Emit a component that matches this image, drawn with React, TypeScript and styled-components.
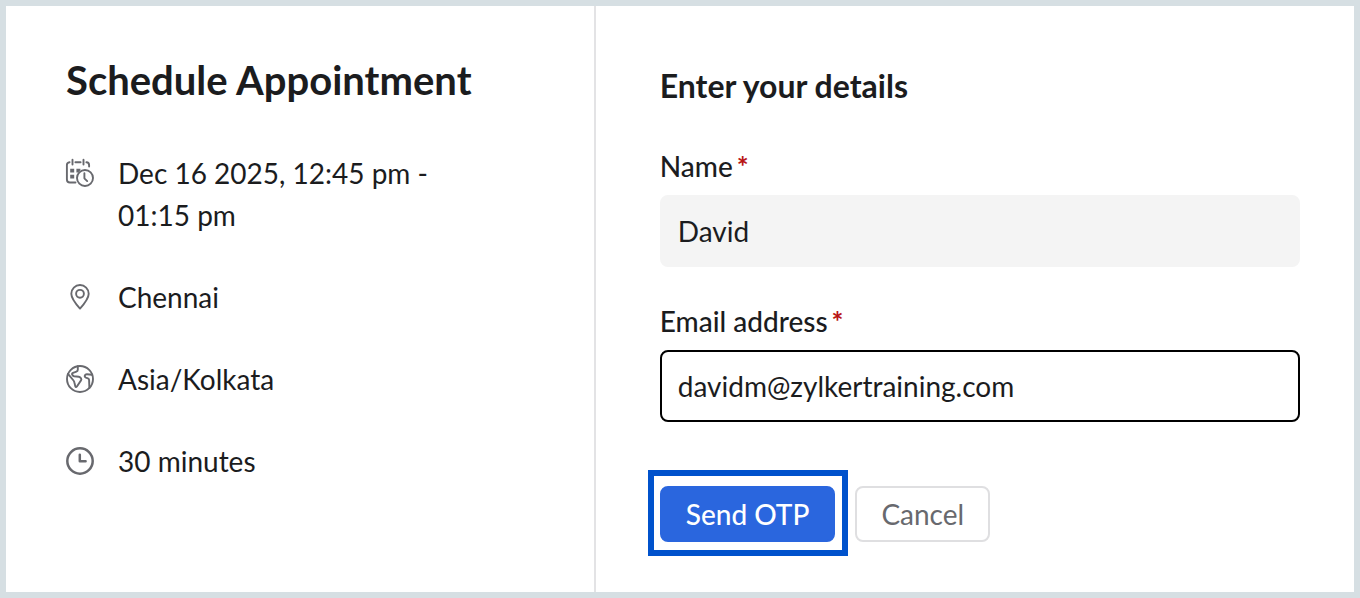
import React, { useState } from "react";
import styled, { createGlobalStyle, css } from "styled-components";

const GlobalStyle = createGlobalStyle`
  *, *::before, *::after { box-sizing: border-box; }
  body {
    margin: 0;
    color: #1b1c1e;
    background: #fff;
    font-family: Lato, "Open Sans", sans-serif;
    font-size: 28px;
    line-height: 42px;
  }
`;

const Page = styled.main`
  display: grid;
  grid-template-columns: 7fr 9fr;
  min-height: 100vh;
  border: 6px solid #d6dfe3;
  background: #fff;
`;

const Summary = styled.section`
  padding: 50px 80px 60px 60px;
  border-right: 2px solid #e3e3e5;
`;

const Title = styled.h1`
  margin: 0 0 48px;
  font-size: 40px;
  line-height: 48px;
  font-weight: 700;
`;

const DetailList = styled.ul`
  display: flex;
  flex-direction: column;
  gap: 40px;
  margin: 0;
  padding: 0;
  list-style: none;
`;

const DetailItem = styled.li`
  display: flex;
  align-items: flex-start;
  gap: 24px;
`;

const IconSlot = styled.span`
  display: flex;
  flex: 0 0 28px;
  align-items: center;
  height: 42px;
  color: #68696e;
`;

const Icon = styled.svg<{ $weight?: number }>`
  width: 28px;
  height: 28px;
  overflow: visible;
  fill: none;
  stroke: currentColor;
  stroke-width: ${(p) => p.$weight ?? 1.9};
  stroke-linecap: round;
  stroke-linejoin: round;
`;

const DetailsForm = styled.form`
  padding: 60px 54px 36px 64px;
`;

const FormTitle = styled.h2`
  margin: 0 0 39px;
  font-size: 32px;
  line-height: 40px;
  font-weight: 700;
`;

const Fields = styled.div`
  display: flex;
  flex-direction: column;
  gap: 33px;
`;

const Field = styled.div`
  display: flex;
  flex-direction: column;
  gap: 8px;
`;

const Label = styled.label`
  font-weight: 500;
`;

const Required = styled.span`
  margin-left: 4px;
  color: #b91515;
  font-weight: 700;
`;

const TextInput = styled.input<{ $filled?: boolean }>`
  width: 100%;
  height: 72px;
  padding: 0 16px;
  border: 2px solid ${(p) => (p.$filled ? "#f4f4f4" : "#000")};
  border-radius: 8px;
  outline: none;
  background: ${(p) => (p.$filled ? "#f4f4f4" : "#fff")};
  color: inherit;
  font: inherit;
`;

const Actions = styled.div`
  display: flex;
  align-items: baseline;
  gap: 7px;
  margin: 48px 0 0 -12px;
`;

const Highlight = styled.div`
  padding: 10px 7px 8px 6px;
  border: 6px solid #0052cc;
`;

const Button = styled.button<{ $primary?: boolean }>`
  display: block;
  height: 56px;
  padding: 0 24px;
  border: 2px solid #dfdfe1;
  border-radius: 8px;
  background: #fff;
  color: #68696e;
  font: inherit;
  cursor: pointer;
  ${(p) =>
    p.$primary &&
    css`
      border-color: #2a66de;
      background: #2a66de;
      color: #fff;
      font-weight: 500;
    `}
`;

const CalendarIcon = () => (
  <Icon viewBox="0 0 28 28" aria-hidden="true">
    <path d="M3.6 3.2Q.9 3.5.9 6v14.5q0 3 3 3h5.6M9.4 3.2h5.2M20.4 3.2q2.7.2 2.7 3v1.3" />
    <path d="M6.5.7v4.8M17.5.7v4.8" />
    <path d="M4.2 9.8h4v3.7h-4zM10.4 9.8h4v1.5l-2.3 2.2h-1.7zM4.2 15.8h4v3.7h-4z" fill="currentColor" stroke="none" />
    <circle cx="19" cy="19" r="8" />
    <path d="M18.4 14.3v5l2.8 2.8" />
  </Icon>
);

const PinIcon = () => (
  <Icon viewBox="0 0 28 28" aria-hidden="true">
    <path d="M14 25.6C10.8 22 5.3 15.8 5.3 10.7a8.7 8.7 0 0 1 17.4 0c0 5.1-5.5 11.3-8.7 14.9z" />
    <circle cx="14" cy="10.8" r="3.9" />
  </Icon>
);

const GlobeIcon = () => (
  <Icon viewBox="0 0 28 28" aria-hidden="true">
    <circle cx="14" cy="14" r="13" />
    <path d="M11.8 1.3v3.5q0 1.4-1.4 1.9L7 7.9q-1.4.6-.8 1.8.5 1.3 1.9 1.5l4.6.5q1.2.2 1.9 1.1l.5.7q.6.9-.1 1.9l-4.1 6.1q-1 1.3-1.6-.1l-.9-3.9q-.2-1.1-.9-2L2 8.9" />
    <path d="M26 9.7l-5-.5q-1.6-.1-2.1 1.2-.6 1.5 1 2.2l2 .7q1.2.5 1.2 1.8l.3 8" />
  </Icon>
);

const ClockIcon = () => (
  <Icon viewBox="0 0 28 28" aria-hidden="true" $weight={2.5}>
    <circle cx="14" cy="14" r="12.7" />
    <path d="M13.8 7.8v6.4h5.8" />
  </Icon>
);

const details = [
  { icon: <CalendarIcon />, text: "Dec 16 2025, 12:45 pm - 01:15\u00a0pm" },
  { icon: <PinIcon />, text: "Chennai" },
  { icon: <GlobeIcon />, text: "Asia/Kolkata" },
  { icon: <ClockIcon />, text: "30 minutes" },
];

export default function App() {
  const [name, setName] = useState("David");
  const [email, setEmail] = useState("davidm@zylkertraining.com");

  return (
    <>
      <GlobalStyle />
      <Page>
        <Summary>
          <Title>Schedule Appointment</Title>
          <DetailList>
            {details.map((d) => (
              <DetailItem key={d.text}>
                <IconSlot>{d.icon}</IconSlot>
                <span>{d.text}</span>
              </DetailItem>
            ))}
          </DetailList>
        </Summary>
        <DetailsForm onSubmit={(e) => e.preventDefault()}>
          <FormTitle>Enter your details</FormTitle>
          <Fields>
            <Field>
              <Label htmlFor="name">
                Name<Required>*</Required>
              </Label>
              <TextInput id="name" $filled value={name} onChange={(e) => setName(e.target.value)} />
            </Field>
            <Field>
              <Label htmlFor="email">
                Email address<Required>*</Required>
              </Label>
              <TextInput id="email" type="email" value={email} onChange={(e) => setEmail(e.target.value)} />
            </Field>
          </Fields>
          <Actions>
            <Highlight>
              <Button type="submit" $primary>Send OTP</Button>
            </Highlight>
            <Button type="button">Cancel</Button>
          </Actions>
        </DetailsForm>
      </Page>
    </>
  );
}
